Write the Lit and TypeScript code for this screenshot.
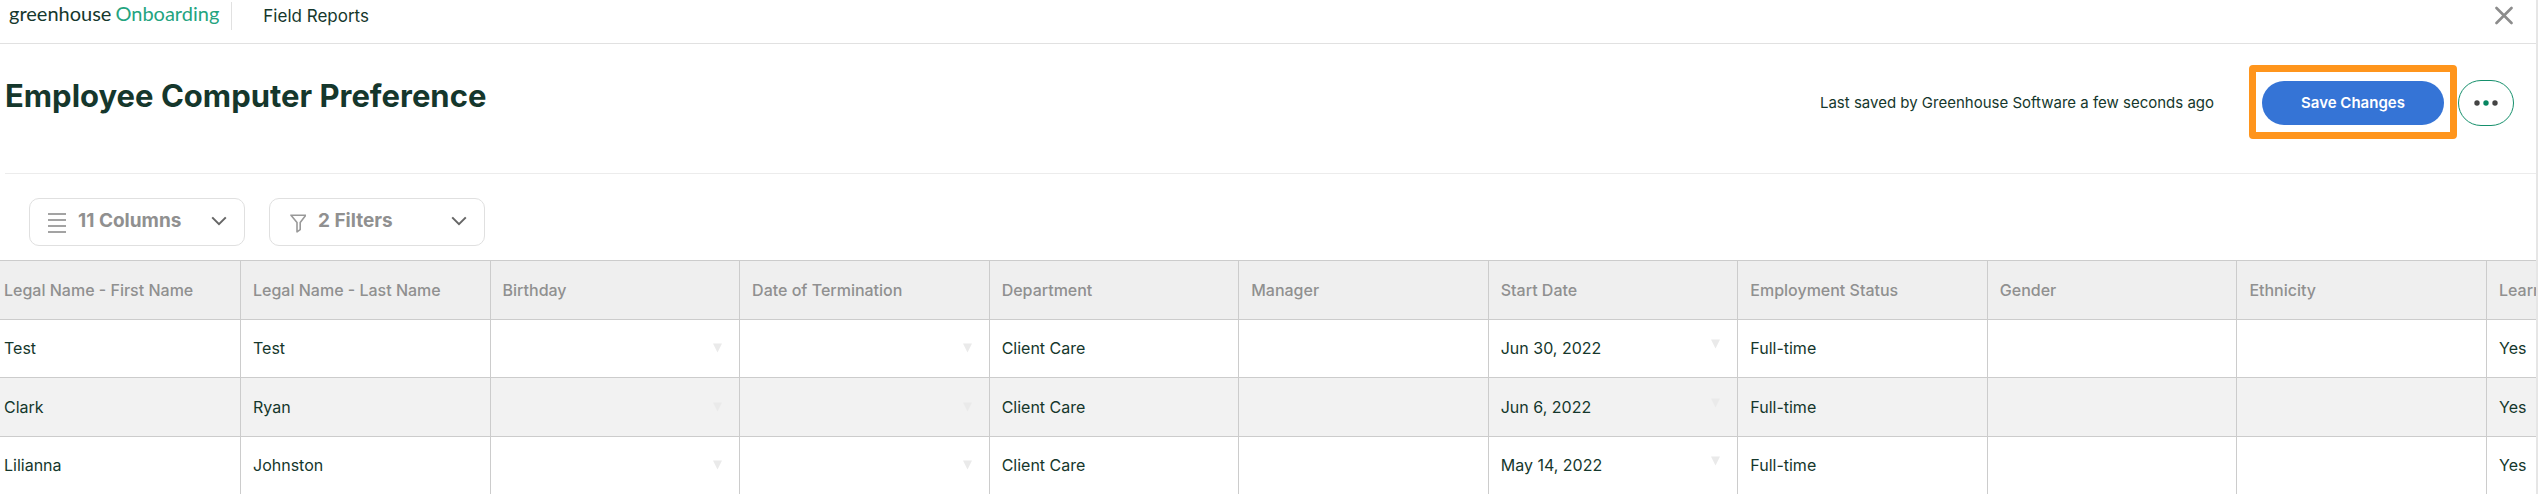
import { LitElement, html, css, svg } from "lit";
import { customElement, state } from "lit/decorators.js";

interface Column {
  key: string;
  label: string;
  picker?: boolean;
}

type Row = Record<string, string>;

const COLUMNS: Column[] = [
  { key: "first", label: "Legal Name - First Name" },
  { key: "last", label: "Legal Name - Last Name" },
  { key: "birthday", label: "Birthday", picker: true },
  { key: "termination", label: "Date of Termination", picker: true },
  { key: "department", label: "Department" },
  { key: "manager", label: "Manager" },
  { key: "start", label: "Start Date", picker: true },
  { key: "status", label: "Employment Status" },
  { key: "gender", label: "Gender" },
  { key: "ethnicity", label: "Ethnicity" },
  { key: "learn", label: "Learn" },
];

const ROWS: Row[] = [
  { first: "Test", last: "Test", department: "Client Care", start: "Jun 30, 2022", status: "Full-time", learn: "Yes" },
  { first: "Clark", last: "Ryan", department: "Client Care", start: "Jun 6, 2022", status: "Full-time", learn: "Yes" },
  { first: "Lilianna", last: "Johnston", department: "Client Care", start: "May 14, 2022", status: "Full-time", learn: "Yes" },
];

const linesIcon = html`<svg class="icon" viewBox="0 0 18 20" width="18" height="20" aria-hidden="true">
  ${[0, 6, 12, 18].map((y) => svg`<rect x="0" y=${y} width="18" height="2" fill="#a3a3a3"></rect>`)}
</svg>`;

const funnelIcon = html`<svg class="icon" viewBox="0 0 18 20" width="18" height="20" aria-hidden="true">
  <path d="M3 2.2H17.8L12.2 9.4V16.6L9 18.8V9.4Z" fill="none" stroke="#999" stroke-width="1.6" stroke-linejoin="round"></path>
</svg>`;

const chevronIcon = html`<svg class="chevron" viewBox="0 0 16 10" width="16" height="10" aria-hidden="true">
  <path d="M1.2 1.4L8 8.2L14.8 1.4" fill="none" stroke="#666" stroke-width="2"></path>
</svg>`;

@customElement("report-table")
export class ReportTable extends LitElement {
  static styles = css`
    :host {
      display: block;
      overflow: hidden;
    }
    .grid {
      width: 100%;
      table-layout: fixed;
      border-collapse: separate;
      border-spacing: 0;
      border-top: 1px solid #cccccc;
      font-size: 16px;
      line-height: 20px;
      color: #15372c;
    }
    .edge-first {
      width: 241px;
    }
    .edge-last {
      width: 49px;
    }
    .head,
    .cell {
      box-sizing: border-box;
      height: 58px;
      padding: 0 12px 1px;
      border-right: 1px solid #cccccc;
      border-bottom: 1px solid #cccccc;
      text-align: left;
      vertical-align: middle;
      white-space: nowrap;
      overflow: hidden;
    }
    .head {
      height: 59px;
      background: #efefef;
      color: #909090;
      font-weight: 500;
    }
    .head:first-child,
    .cell:first-child {
      padding-left: 4px;
    }
    .head:last-child,
    .cell:last-child {
      padding-right: 0;
      border-right: 0;
    }
    .row:nth-child(even) .cell {
      height: 59px;
      background: #f2f2f2;
    }
    .field {
      display: flex;
      justify-content: space-between;
      align-items: center;
      height: 20px;
      padding-right: 5px;
    }
    .field.filled {
      align-items: flex-start;
    }
    .open {
      display: block;
      margin: 0 0 0 auto;
      padding: 0;
      border: 0;
      background: none;
      line-height: 0;
      cursor: pointer;
    }
    .filled .open {
      padding-top: 1px;
    }
  `;

  render() {
    return html`<table class="grid">
      <colgroup>
        ${COLUMNS.map(
          (_, i) => html`<col class=${i === 0 ? "edge-first" : i === COLUMNS.length - 1 ? "edge-last" : "middle"} />`
        )}
      </colgroup>
      <thead>
        <tr>
          ${COLUMNS.map((c) => html`<th class="head" scope="col">${c.label}</th>`)}
        </tr>
      </thead>
      <tbody>
        ${ROWS.map(
          (r) => html`<tr class="row">
            ${COLUMNS.map((c) => html`<td class="cell">${c.picker ? this.picker(c, r) : r[c.key] ?? ""}</td>`)}
          </tr>`
        )}
      </tbody>
    </table>`;
  }

  private picker(c: Column, r: Row) {
    const value = r[c.key];
    return html`<div class="field ${value ? "filled" : ""}">
      ${value ? html`<span>${value}</span>` : ""}
      <button class="open" type="button" aria-label="Choose ${c.label}">
        <svg viewBox="0 0 9 10" width="9" height="10" aria-hidden="true"><path d="M0 0.5H9L4.5 9.5Z" fill="#eaeaea"></path></svg>
      </button>
    </div>`;
  }
}

@customElement("app-root")
export class AppRoot extends LitElement {
  static styles = css`
    :host {
      display: block;
      box-sizing: border-box;
      min-height: 100vh;
      overflow: hidden;
      border-right: 2px solid #e6e6e6;
      background: #ffffff;
      font-family: Inter, "Liberation Sans", sans-serif;
      color: #15372c;
    }
    button {
      font-family: inherit;
      cursor: pointer;
    }
    .topbar {
      display: flex;
      align-items: flex-start;
      height: 43px;
      padding: 0 23px 0 9px;
      border-bottom: 1px solid #e1e1e1;
    }
    .brand {
      display: flex;
      gap: 4px;
      padding-right: 12px;
      font-family: Lato, sans-serif;
      font-size: 20px;
      line-height: 26px;
      color: #15372c;
      text-decoration: none;
    }
    .product {
      color: #24a47f;
    }
    .section {
      margin-top: 2px;
      padding-left: 31px;
      border-left: 1px solid #e1e1e1;
      font-size: 17px;
      line-height: 28px;
    }
    .close {
      margin: 6px 0 0 auto;
      padding: 0;
      border: 0;
      background: none;
      line-height: 0;
    }
    .pagehead {
      display: flex;
      align-items: flex-start;
      margin-left: 5px;
      padding: 21px 22px 34px 0;
      border-bottom: 1px solid #ececec;
    }
    .title {
      margin: 11px auto 0 0;
      font-size: 31px;
      font-weight: 700;
      line-height: 40px;
    }
    .saved {
      margin: 28px 35px 0 0;
      font-size: 15px;
      line-height: 20px;
    }
    .highlight {
      padding: 9px 6px 7px;
      border: 7px solid #ff951c;
      border-radius: 4px;
    }
    .save {
      display: block;
      min-width: 182px;
      height: 44px;
      padding: 0 24px;
      border: 0;
      border-radius: 22px;
      background: #3574d6;
      color: #ffffff;
      font-size: 15px;
      font-weight: 600;
      line-height: 20px;
    }
    .more {
      display: flex;
      align-items: center;
      justify-content: center;
      width: 56px;
      height: 46px;
      margin: 15px 0 0 1px;
      padding: 0;
      border: 1px solid #16906c;
      border-radius: 23px;
      background: #ffffff;
    }
    .toolbar {
      display: flex;
      gap: 24px;
      padding: 24px 29px 14px;
    }
    .select {
      display: flex;
      align-items: center;
      gap: 12px;
      width: 216px;
      height: 48px;
      padding: 0 17px 0 18px;
      border: 1px solid #e0e0e0;
      border-radius: 10px;
      background: #ffffff;
      color: #909090;
      font-size: 19px;
      font-weight: 700;
      line-height: 24px;
    }
    .caption {
      margin-right: auto;
      padding-bottom: 3px;
    }
    .icon {
      margin-top: 2px;
    }
    .chevron {
      margin-bottom: 3px;
    }
  `;

  @state() private saved = "Last saved by Greenhouse Software a few seconds ago";

  render() {
    return html`
      <header class="topbar">
        <a class="brand" href="#"><span>greenhouse</span><span class="product">Onboarding</span></a>
        <div class="section">Field Reports</div>
        <button class="close" type="button" aria-label="Close">
          <svg viewBox="0 0 18 19" width="18" height="19" aria-hidden="true">
            <path d="M1.5 2L16.5 17M16.5 2L1.5 17" stroke="#8c8c8c" stroke-width="2.6" stroke-linecap="round"></path>
          </svg>
        </button>
      </header>
      <main>
        <div class="pagehead">
          <h1 class="title">Employee Computer Preference</h1>
          <p class="saved">${this.saved}</p>
          <div class="highlight"><button class="save" type="button">Save Changes</button></div>
          <button class="more" type="button" aria-label="More actions">
            <svg viewBox="0 0 24 6" width="24" height="6" aria-hidden="true">
              <circle cx="3" cy="3" r="2.7" fill="#444"></circle>
              <circle cx="12" cy="3" r="2.7" fill="#078661"></circle>
              <circle cx="21" cy="3" r="2.7" fill="#444"></circle>
            </svg>
          </button>
        </div>
        <div class="toolbar">
          <button class="select" type="button">${linesIcon}<span class="caption">11 Columns</span>${chevronIcon}</button>
          <button class="select" type="button">${funnelIcon}<span class="caption">2 Filters</span>${chevronIcon}</button>
        </div>
        <report-table></report-table>
      </main>
    `;
  }
}
